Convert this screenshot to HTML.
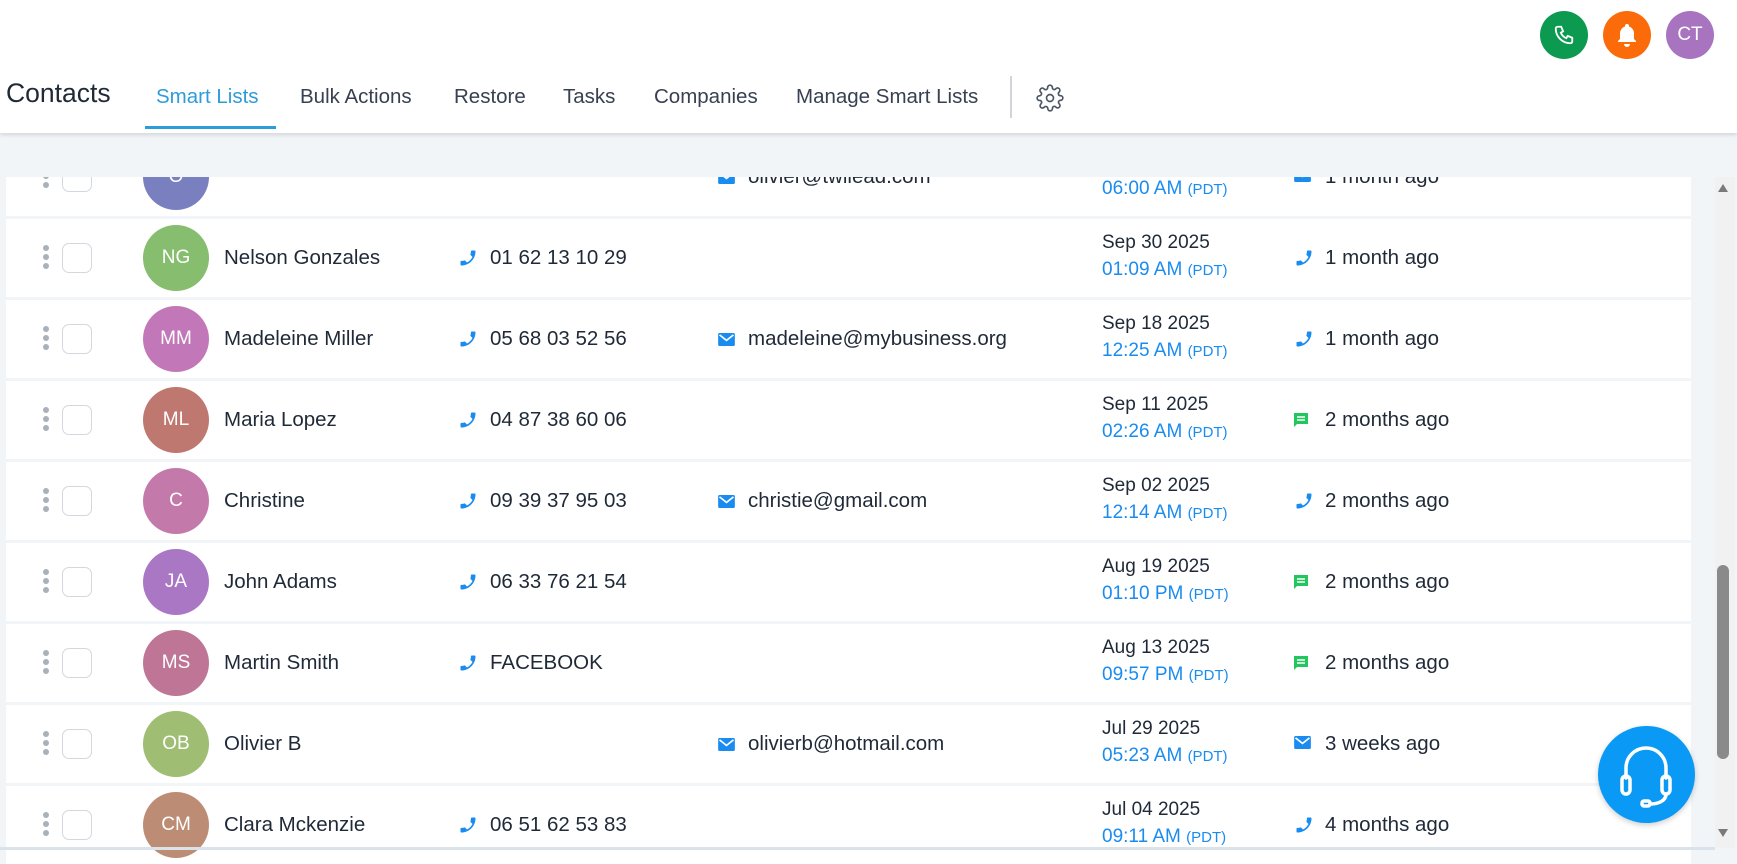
<!DOCTYPE html>
<html><head><meta charset="utf-8"><style>
*{margin:0;padding:0;box-sizing:border-box}
body{width:1737px;height:850px;overflow:hidden;background:#f1f5f8;font-family:"Liberation Sans",Arial,sans-serif;color:#1f2937;position:relative}
.hdr{position:absolute;left:0;top:0;width:1737px;height:133px;background:#fff;box-shadow:0 2px 4px rgba(0,0,0,.12);z-index:5}
.abs{position:absolute}
.tab{position:absolute;top:85px;font-size:20.5px;color:#374151;white-space:nowrap}
.circ{position:absolute;top:11px;width:48px;height:48px;border-radius:50%;display:flex;align-items:center;justify-content:center;color:#fff;font-size:19px}
.row{position:absolute;left:6px;width:1685px;height:78px;background:#fff}
.dots{position:absolute;left:37px;top:26px;width:6px}
.dots i{display:block;width:6px;height:6px;border-radius:50%;background:#a9b1ba;margin-bottom:3px}
.cb{position:absolute;left:56px;top:24px;width:30px;height:30px;border:1px solid #d3d8de;border-radius:7px}
.av{position:absolute;left:137px;top:6px;width:66px;height:66px;border-radius:50%;color:#fff;font-size:19px;display:flex;align-items:center;justify-content:center}
.nm{position:absolute;left:218px;top:27px;font-size:20.5px;color:#1f2937;white-space:nowrap}
.ph{position:absolute;left:452px;top:29px}
.pt{position:absolute;left:484px;top:27px;font-size:20.5px;white-space:nowrap}
.em{position:absolute;left:712px;top:31px}
.et{position:absolute;left:742px;top:27px;font-size:20.5px;white-space:nowrap}
.dt{position:absolute;left:1096px;top:13px;font-size:19px;white-space:nowrap}
.tm{position:absolute;left:1096px;top:40px;font-size:19px;color:#1a8cf0;white-space:nowrap}
.tm small{font-size:15px}
.ai{position:absolute;left:1288px;top:29px}
.at{position:absolute;left:1319px;top:27px;font-size:20.5px;white-space:nowrap}
</style></head><body>
<div class="hdr">
 <div class="circ" style="left:1540px;background:#0b9a50"><svg width="22" height="22" viewBox="0 0 24 24" fill="none" stroke="#fff" stroke-width="2"><path d="M5 3h4l2 5-2.5 1.5a11 11 0 0 0 6 6L16 13l5 2v4a2 2 0 0 1-2 2A16 16 0 0 1 3 5a2 2 0 0 1 2-2"/></svg></div>
 <div class="circ" style="left:1603px;background:#fb6b09"><svg width="24" height="26" viewBox="0 0 24 26" fill="#fff"><path d="M12 2a2 2 0 0 1 2 2v.5A7 7 0 0 1 19 11v6l2 2v1H3v-1l2-2v-6a7 7 0 0 1 5-6.5V4a2 2 0 0 1 2-2zM9 22h6a3 3 0 0 1-6 0z"/></svg></div>
 <div class="circ" style="left:1666px;background:#a873bf">CT</div>
 <div class="abs" style="left:6px;top:78px;font-size:26.5px;color:#1f2937">Contacts</div>
 <div class="tab" style="left:156px;color:#2d9cdb">Smart Lists</div>
 <div class="abs" style="left:145px;top:126px;width:131px;height:3px;background:#2d9cdb"></div>
 <div class="tab" style="left:300px">Bulk Actions</div>
 <div class="tab" style="left:454px">Restore</div>
 <div class="tab" style="left:563px">Tasks</div>
 <div class="tab" style="left:654px">Companies</div>
 <div class="tab" style="left:796px">Manage Smart Lists</div>
 <div class="abs" style="left:1010px;top:76px;width:2px;height:42px;background:#d1d5db"></div>
 <svg class="abs" style="left:1036px;top:84px" width="28" height="28" viewBox="0 0 24 24" fill="none" stroke="#4b5563" stroke-width="1.4"><circle cx="12" cy="12" r="3"/><path d="M19.4 15a1.7 1.7 0 0 0 .3 1.8l.1.1a2 2 0 1 1-2.8 2.8l-.1-.1a1.7 1.7 0 0 0-1.8-.3 1.7 1.7 0 0 0-1 1.5V21a2 2 0 1 1-4 0v-.1a1.7 1.7 0 0 0-1.1-1.5 1.7 1.7 0 0 0-1.8.3l-.1.1a2 2 0 1 1-2.8-2.8l.1-.1a1.7 1.7 0 0 0 .3-1.8 1.7 1.7 0 0 0-1.5-1H3a2 2 0 1 1 0-4h.1a1.7 1.7 0 0 0 1.5-1.1 1.7 1.7 0 0 0-.3-1.8l-.1-.1a2 2 0 1 1 2.8-2.8l.1.1a1.7 1.7 0 0 0 1.8.3H9a1.7 1.7 0 0 0 1-1.5V3a2 2 0 1 1 4 0v.1a1.7 1.7 0 0 0 1 1.5 1.7 1.7 0 0 0 1.8-.3l.1-.1a2 2 0 1 1 2.8 2.8l-.1.1a1.7 1.7 0 0 0-.3 1.8V9a1.7 1.7 0 0 0 1.5 1H21a2 2 0 1 1 0 4h-.1a1.7 1.7 0 0 0-1.5 1z"/></svg>
</div>

<svg width="0" height="0" style="position:absolute"><defs>
<symbol id="ph" viewBox="0 0 24 24"><g transform="translate(24 0) scale(-1 1)"><path fill="#1a8cf0" d="M20 15.5c-1.25 0-2.45-.2-3.57-.57a1.02 1.02 0 0 0-1.02.24l-2.2 2.2a15.07 15.07 0 0 1-6.59-6.59l2.2-2.21a.96.96 0 0 0 .25-1A11.36 11.36 0 0 1 8.5 4c0-.55-.45-1-1-1H4c-.55 0-1 .45-1 1 0 9.39 7.61 17 17 17 .55 0 1-.45 1-1v-3.5c0-.55-.45-1-1-1z"/></g></symbol>
<symbol id="em" viewBox="0 0 18 14"><rect x="0" y="0" width="18" height="14" rx="1.5" fill="#1a8cf0"/><path d="M1.5 2l7.5 6 7.5-6" stroke="#fff" stroke-width="1.8" fill="none"/></symbol>
<symbol id="ch" viewBox="0 0 14 14"><path fill="#22c55e" d="M0 0h14v11H3l-3 3z"/><path stroke="#fff" stroke-width="1.5" d="M3 4h8M3 7h8"/></symbol>
</defs></svg>

<div id="rows"></div>

<div class="abs" style="left:1715px;top:177px;width:20px;height:671px;background:#f1f1f1"></div>
<div class="abs" style="left:1717px;top:565px;width:12px;height:194px;background:#8a8a8a;border-radius:6px"></div>
<div class="abs" style="left:1718px;top:184px;width:0;height:0;border-left:5px solid transparent;border-right:5px solid transparent;border-bottom:8px solid #7a7a7a"></div>
<div class="abs" style="left:1718px;top:829px;width:0;height:0;border-left:5px solid transparent;border-right:5px solid transparent;border-top:8px solid #7a7a7a"></div>
<div class="abs" style="left:0;top:847px;width:1715px;height:3px;background:#dbe3ea"></div>
<div class="abs" style="left:1598px;top:726px;width:97px;height:97px;border-radius:50%;background:#0a9af5;box-shadow:0 2px 6px rgba(0,0,0,.2)">
 <svg style="position:absolute;left:18px;top:14px" width="60" height="70" viewBox="0 0 60 70" fill="none" stroke="#fff" stroke-width="3.5" stroke-linecap="round"><path d="M10 38V28a20 20 0 0 1 40 0v10"/><rect x="6" y="36" width="8" height="18" rx="4"/><rect x="46" y="36" width="8" height="18" rx="4"/><path d="M50 54c0 7-8 10-16 10"/><rect x="26" y="61" width="8" height="5" rx="2"/></svg>
</div>

<script>
const R=[
["O","#7a7fc0","","",  "olivier@twilead.com","","06:00 AM","em","1 month ago"],
["NG","#86bd6f","Nelson Gonzales","01 62 13 10 29","","Sep 30 2025","01:09 AM","ph","1 month ago"],
["MM","#c278b8","Madeleine Miller","05 68 03 52 56","madeleine@mybusiness.org","Sep 18 2025","12:25 AM","ph","1 month ago"],
["ML","#bf7870","Maria Lopez","04 87 38 60 06","","Sep 11 2025","02:26 AM","ch","2 months ago"],
["C","#c479ab","Christine","09 39 37 95 03","christie@gmail.com","Sep 02 2025","12:14 AM","ph","2 months ago"],
["JA","#a977c4","John Adams","06 33 76 21 54","","Aug 19 2025","01:10 PM","ch","2 months ago"],
["MS","#bf7595","Martin Smith","FACEBOOK","","Aug 13 2025","09:57 PM","ch","2 months ago"],
["OB","#9fbd73","Olivier B","","olivierb@hotmail.com","Jul 29 2025","05:23 AM","em","3 weeks ago"],
["CM","#bd8c74","Clara Mckenzie","06 51 62 53 83","","Jul 04 2025","09:11 AM","ph","4 months ago"]];
let h='';
R.forEach((r,i)=>{const top=138+i*81;
const ic=t=>t=='ph'?'<svg width="20" height="20"><use href="#ph"/></svg>':t=='em'?'<svg width="17" height="13" style="margin-top:2px"><use href="#em"/></svg>':'<svg width="14" height="14" style="margin-top:3px"><use href="#ch"/></svg>';
h+=`<div class="row" style="top:${top}px"><div class="dots"><i></i><i></i><i></i></div><div class="cb"></div><div class="av" style="background:${r[1]}">${r[0]}</div><div class="nm">${r[2]}</div>`+
(r[3]?`<div class="ph">${ic('ph')}</div><div class="pt">${r[3]}</div>`:'')+
(r[4]?`<div class="em">${ic('em')}</div><div class="et">${r[4]}</div>`:'')+
`<div class="dt">${r[5]}</div><div class="tm">${r[6]} <small>(PDT)</small></div><div class="ai">${ic(r[7])}</div><div class="at">${r[8]}</div></div>`;});
document.getElementById('rows').innerHTML=h;
</script>
<div class="abs" style="left:0;top:133px;width:1715px;height:44px;background:#f1f5f8;z-index:3"></div>
</body></html>
